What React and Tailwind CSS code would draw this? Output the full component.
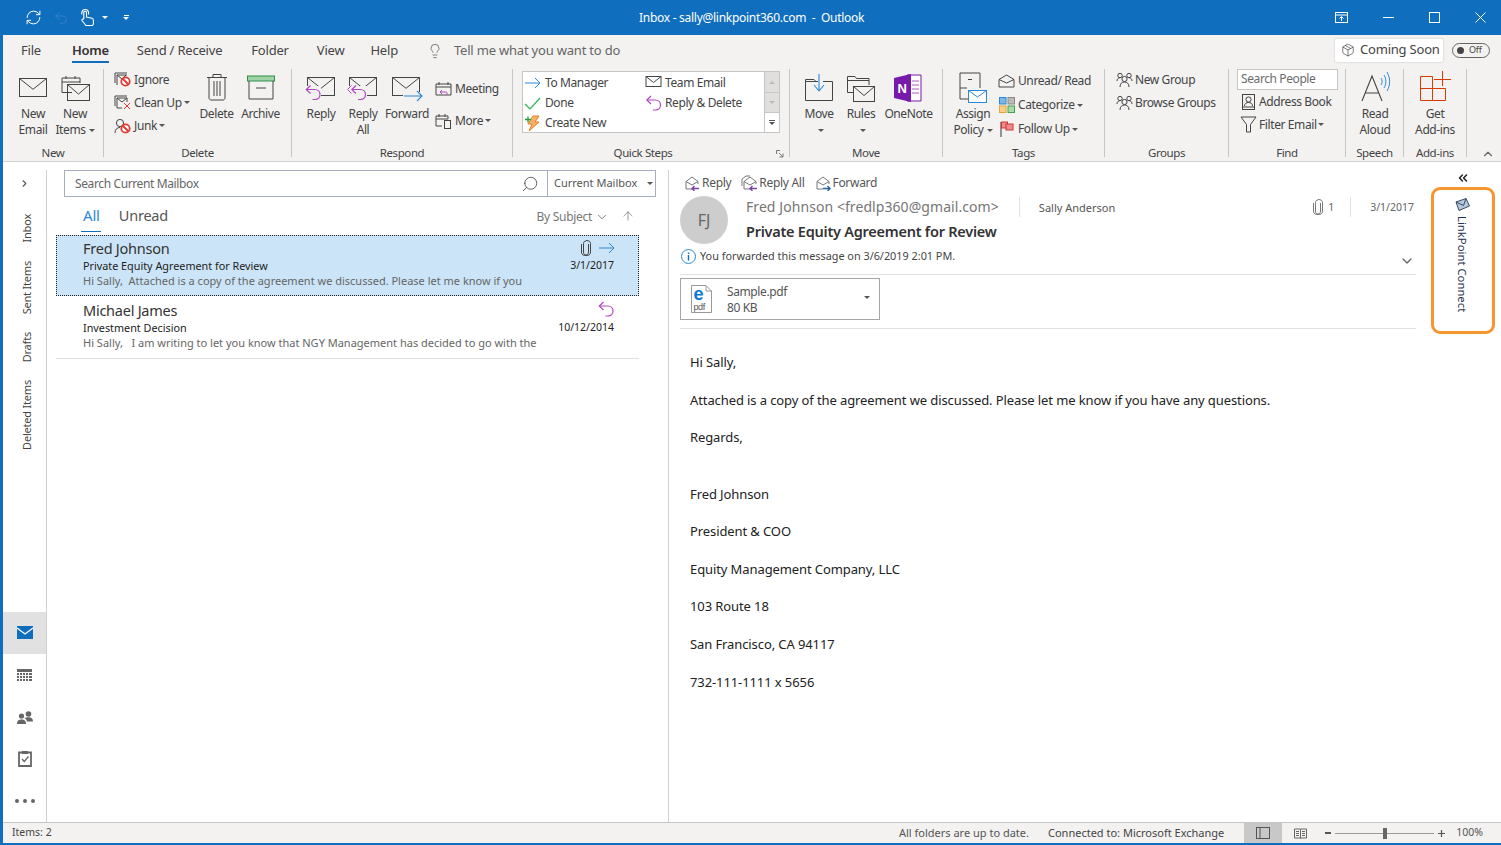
import React from "react";
import { Search, ArrowUp, ChevronDown, ChevronsLeft, ChevronRight, ChevronUp, Lightbulb, Package, RefreshCw, Undo2 } from "lucide-react";

const Caret = ({ c = "#555", cls = "" }) => (
  <svg width="6" height="3" viewBox="0 0 6 3" className={"shrink-0 " + cls}><path d="M0 0h6L3 3z" fill={c} /></svg>
);

const Sv = ({ w, h, children, cls = "" }) => (
  <svg width={w} height={h} viewBox={`0 0 ${w} ${h}`} fill="none" stroke="#444" strokeWidth="1" className={"shrink-0 " + cls}>{children}</svg>
);

const Env = ({ x = 0.5, y = 0.5, w = 27, h = 18, fill = "none", stroke = "#444" }) => (
  <g stroke={stroke}>
    <rect x={x} y={y} width={w} height={h} fill={fill} />
    <path d={`M${x} ${y}L${x + w / 2} ${y + h * 0.6}L${x + w} ${y}`} />
  </g>
);

const ReplyArrow = ({ x = 0, y = 0, c = "#B146C2" }) => (
  <g transform={`translate(${x} ${y})`} stroke={c} strokeWidth="1.2" fill="none">
    <path d="M5 0.5L0.8 4.5L5 8.5" />
    <path d="M1 4.5H9C12.5 4.5 14.5 6.8 14.5 9.5S12.5 14.5 9.5 14.5H7" />
  </g>
);

const Big = ({ w, l1, l2, caret, children, iconCls = "" }) => (
  <div className="flex flex-col items-center shrink-0" style={{ width: w }}>
    <div className={"h-[37px] flex items-center justify-center " + iconCls}>{children}</div>
    <div className="leading-[16px] whitespace-nowrap">{l1}</div>
    {(l2 || caret) && (
      <div className="leading-[16px] whitespace-nowrap flex items-center gap-[3px] h-[16px]">
        {l2}
        {caret && <Caret />}
      </div>
    )}
  </div>
);

const Small = ({ icon, label, caret, gap = "gap-[3px]", h = "h-[23px]" }) => (
  <div className={"flex items-center whitespace-nowrap " + gap + " " + h}>
    <span className="w-[17px] flex justify-center shrink-0">{icon}</span>
    <span>{label}</span>
    {caret && <Caret cls="-ml-[1px]" />}
  </div>
);

const Group = ({ w, label, children, cls = "", after, labelCls = "" }) => (
  <div className="flex flex-col h-[88px] border-r border-[#c6c6c6] shrink-0 relative" style={{ width: w }}>
    <div className={"h-[76px] flex " + cls}>{children}</div>
    <div className={"h-[12px] leading-[16px] text-center text-[11.5px] text-[#444] " + labelCls}>{label}</div>
    {after}
  </div>
);

const Ban = ({ x, y }) => (
  <g transform={`translate(${x} ${y})`}>
    <circle cx="5" cy="5" r="4.2" stroke="#E03C31" strokeWidth="1.8" fill="#fff" />
    <path d="M2 2L8 8" stroke="#E03C31" strokeWidth="1.8" />
  </g>
);

const People = () => (
  <Sv w={17} h={16}>
    <circle cx="4" cy="3.5" r="2.2" />
    <circle cx="13" cy="3.5" r="2.2" />
    <circle cx="8.5" cy="7" r="2.6" />
    <path d="M1 9C1 7 2 6 3.5 6M16 9C16 7 15 6 13.5 6M4 15C4 11.5 6 10 8.5 10S13 11.5 13 15" />
  </Sv>
);

const ActIcon = ({ c, two, forward }) => (
  <Sv w={17} h={16}>
    {two && <path d="M1 11V4L5 1H9" stroke="#777" />}
    <g stroke="#777">
      <path d="M3 6.5V14H9M15 9V6.5L9 2L3 6.5L9 10L15 6.5" />
    </g>
    {forward ? <path d="M9 13.5H16M13.5 11L16 13.5L13.5 16" stroke={c} strokeWidth="1.4" /> : <path d="M16 13.5H9M11.5 11L9 13.5L11.5 16" stroke={c} strokeWidth="1.4" />}
  </Sv>
);

const Ribbon = () => (
  <div className="h-[93px] pb-[4px] border-b border-[#d2d0ce] flex text-[12px] tracking-[-0.4px] text-[#444] bg-[#f3f2f1]">
    <Group w={101} label="New" cls="pl-[9px]">
      <Big w={42} l1="New" l2="Email"><Sv w={28} h={20}><Env /></Sv></Big>
      <Big w={42} l1="New" l2="Items" caret>
        <Sv w={29} h={29} cls="mt-[2px]">
          <path d="M11 18.5H1V4H19V9M1 8H19M5 2V5M14 2V5" />
          <Env x={6.5} y={10.5} w={22} h={16} />
        </Sv>
      </Big>
    </Group>
    <Group w={188} label="Delete">
      <div className="ml-[10px] w-[80px] text-[12px] -mt-[1px]">
        <Small label="Ignore" icon={<Sv w={17} h={15}><path d="M1 11V1H13M3 13V3H13" /><path d="M3 3L8 7L12 3" /><Ban x={6.5} y={4.5} /></Sv>} />
        <Small label="Clean Up" caret icon={<Sv w={17} h={15}><path d="M1 11V1H13M3 13V3H13V7M3 3L8 7L13 3M3 13H8" /><path d="M10 8L16 14M16 8L10 14" stroke="#E03C31" /></Sv>} />
        <Small label="Junk" caret icon={<Sv w={17} h={16}><circle cx="6" cy="5" r="3.6" /><path d="M1 15C1 11.5 3 9.5 6 9.5" /><Ban x={6.5} y={5.5} /></Sv>} />
      </div>
      <Big w={45} l1="Delete">
        <Sv w={22} h={28} cls="-mt-[1px]">
          <path d="M1 4.5H21M7 4V1.5H15V4M3 5V25C3 26 4 27 5 27H17C18 27 19 26 19 25V5M8 8V23M11 8V23M14 8V23" />
        </Sv>
      </Big>
      <Big w={43} l1="Archive">
        <Sv w={28} h={25}>
          <rect x="0.5" y="1" width="27" height="5" fill="#9FD5A6" stroke="#2F8F46" />
          <path d="M2 6V24H26V6M9 13H19" />
        </Sv>
      </Big>
    </Group>
    <Group w={221} label="Respond" cls="pl-[8px]">
      <Big w={42} l1="Reply">
        <Sv w={31} h={28} cls="-ml-[1px]"><Env x={2.5} y={3.5} w={27} h={18} /><rect x="0" y="12" width="16" height="16" fill="#f3f2f1" stroke="none" /><ReplyArrow x={0.5} y={11} /></Sv>
      </Big>
      <Big w={42} l1="Reply" l2="All">
        <Sv w={31} h={28} cls="-ml-[1px]"><Env x={2.5} y={3.5} w={27} h={18} /><rect x="0" y="12" width="20" height="16" fill="#f3f2f1" stroke="none" /><path d="M4.5 11.5L0.5 15.5L4.5 19.5" stroke="#B146C2" /><ReplyArrow x={4} y={11} /></Sv>
      </Big>
      <Big w={46} l1="Forward">
        <Sv w={31} h={28}><Env x={0.5} y={3.5} w={27} h={18} /><rect x="11" y="18" width="20" height="8" fill="#f3f2f1" stroke="none" /><path d="M12 22H29M25 17L30 22L25 27" stroke="#2B88D8" strokeWidth="1.1" /></Sv>
      </Big>
      <div className="ml-[5px] flex flex-col pt-[8px] gap-[9px]">
        <Small h="h-[23px]" label="Meeting" icon={<Sv w={17} h={16}><path d="M1 14V3H16V14H1M1 6H16M4 1V4M13 1V4" /><path d="M7 9L5 11L7 13M5.5 11H11C12.5 11 12.5 14 11 14" stroke="#B146C2" /></Sv>} />
        <Small h="h-[23px]" label="More" caret icon={<Sv w={17} h={16}><path d="M7 13H1V3H13V6M1 6H13M4 1V4M10 1V4" /><rect x="9.5" y="7.5" width="6" height="8" /></Sv>} />
      </div>
    </Group>
    <Group
      w={277}
      label="Quick Steps"
      labelCls="pr-[16px]"
      after={
        <Sv w={8} h={8} cls="absolute right-[5px] bottom-[-1px]"><path d="M0.5 0.5H4M0.5 0.5V4" stroke="#777" /><path d="M3 3L7 7M7 3.5V7H3.5" stroke="#777" /></Sv>
      }
    >
      <div className="ml-[9px] mt-[2px] w-[258px] h-[62px] bg-white border border-[#c6c6c6] flex">
        <div className="w-[122px] pl-[1px] pt-[1px]">
          <Small h="h-[20px]" gap="gap-[4px]" label="To Manager" icon={<Sv w={17} h={12}><path d="M1 6H16M11 1L16 6L11 11" stroke="#2B88D8" /></Sv>} />
          <Small h="h-[20px]" gap="gap-[4px]" label="Done" icon={<Sv w={17} h={13}><path d="M1 7L6 12L16 1" stroke="#2FB457" strokeWidth="1.2" /></Sv>} />
          <Small h="h-[20px]" gap="gap-[4px]" label="Create New" icon={
            <Sv w={17} h={17}>
              <path d="M9 1H15L11 7H15L5 16L8 9H4z" fill="#F6B26B" stroke="#E8801A" />
              <path d="M1 4.5H7M4 1.5V7.5" stroke="#1E9E3E" strokeWidth="1.3" />
            </Sv>
          } />
        </div>
        <div className="w-[119px] pt-[1px]">
          <Small h="h-[20px]" gap="gap-[3px]" label="Team Email" icon={<Sv w={17} h={12} cls="-mt-[3px]"><Env x={1} y={0.5} w={15} h={10} /></Sv>} />
          <Small h="h-[20px]" gap="gap-[3px]" label="Reply & Delete" icon={<Sv w={17} h={16}><ReplyArrow x={1} y={0.5} /></Sv>} />
        </div>
        <div className="w-[15px] flex flex-col border-l border-[#c6c6c6]">
          <div className="h-[20px] bg-[#e1dfdd] flex items-center justify-center"><Caret c="#bbb" cls="rotate-180" /></div>
          <div className="h-[20px] bg-[#e1dfdd] border-t border-[#c6c6c6] flex items-center justify-center"><Caret c="#bbb" /></div>
          <div className="flex-1 border-t border-[#c6c6c6] flex flex-col items-center justify-center gap-[1px]"><div className="w-[6px] h-[1px] bg-[#555]" /><Caret /></div>
        </div>
      </div>
    </Group>
    <Group w={153} label="Move" cls="pl-[8px]">
      <Big w={42} l1="Move" l2={<span className="w-0" />} caret>
        <Sv w={28} h={27}>
          <path d="M0.5 26.5V7.5H11M0.5 7.5V5.5H9L11 7.5H13M18 7.5H27.5V26.5H0.5" />
          <path d="M14 0V16M9 11L14 17L19 11" stroke="#2B88D8" strokeWidth="1.1" />
        </Sv>
      </Big>
      <Big w={42} l1="Rules" l2={<span className="w-0" />} caret>
        <Sv w={29} h={29} cls="mt-[1px]">
          <path d="M0.5 18.5V2.5H8L9.5 4.5H22V11M0.5 6.5H22M0.5 18.5H6" />
          <Env x={6.5} y={12.5} w={21} h={15} />
        </Sv>
      </Big>
      <Big w={53} l1="OneNote">
        <svg width="28" height="28" viewBox="0 0 28 28" className="shrink-0 -ml-[1px]">
          <path d="M13 1H27V27H13z" fill="#fff" stroke="#7719AA" />
          <path d="M18 7H25M18 11H25M18 15H25M18 19H25" stroke="#A45CC7" />
          <path d="M0 4L17 0V28L0 24z" fill="#7719AA" />
          <text x="3.5" y="19" fontSize="13" fontWeight="700" fill="#fff" fontFamily="Liberation Sans">N</text>
        </svg>
      </Big>
    </Group>
    <Group w={162} label="Tags" cls="pl-[8px]">
      <Big w={44} l1="Assign" l2="Policy" caret>
        <Sv w={29} h={34} cls="mt-[3px]">
          <path d="M1 16V1H21V16M1 16H8M1 16V27H9M9 7.5H13" />
          <rect x="9.5" y="18.5" width="18" height="12" fill="#fff" stroke="#2B88D8" />
          <path d="M9.5 18.5L18.5 25L27.5 18.5" stroke="#2B88D8" />
        </Sv>
      </Big>
      <div className="ml-[3px]">
        <Small h="h-[24px]" label="Unread/ Read" icon={<Sv w={17} h={14}><path d="M1 5.5V13H16V5.5L8.5 1L1 5.5L8.5 9L16 5.5" /></Sv>} />
        <Small h="h-[24px]" label="Categorize" caret icon={
          <svg width="16" height="16" viewBox="0 0 16 16" className="shrink-0">
            <rect x="0.5" y="0.5" width="6.5" height="6.5" fill="#7DB7E8" stroke="#2B88D8" />
            <rect x="9" y="0.5" width="6.5" height="6.5" fill="#bbb" stroke="#888" />
            <rect x="0.5" y="9" width="6.5" height="6.5" fill="#F8CE8A" stroke="#E8A33A" />
            <rect x="9" y="9" width="6.5" height="6.5" fill="#A8DBA8" stroke="#3EA44E" />
          </svg>
        } />
        <Small h="h-[24px]" label="Follow Up" caret icon={
          <svg width="14" height="16" viewBox="0 0 14 16" className="shrink-0">
            <path d="M1 1V16" stroke="#333" />
            <rect x="1.5" y="1" width="6" height="6" fill="#F38B8B" stroke="#D13438" />
            <rect x="6" y="3" width="7" height="6" fill="#F38B8B" stroke="#D13438" />
          </svg>
        } />
      </div>
    </Group>
    <Group w={124} label="Groups" cls="pl-[11px]">
      <div className="-mt-[1px]">
        <Small gap="gap-[2px]" label="New Group" icon={<People />} />
        <Small gap="gap-[2px]" label="Browse Groups" icon={<People />} />
      </div>
    </Group>
    <Group w={117} label="Find" cls="flex-col pl-[8px]">
      <div className="w-[101px] h-[21px] bg-white border border-[#c6c6c6] pl-[3px] leading-[18px] text-[#6b6b6b]">Search People</div>
      <div className="pl-[3px]">
        <Small gap="gap-[2px]" label="Address Book" icon={<Sv w={13} h={16}><rect x="0.5" y="0.5" width="12" height="15" /><circle cx="6.5" cy="5.5" r="2.6" /><path d="M2.5 12C2.5 9.5 4.5 8.5 6.5 8.5S10.5 9.5 10.5 12M0.5 13H12.5" /></Sv>} />
        <Small gap="gap-[2px]" label="Filter Email" caret icon={<Sv w={17} h={17}><path d="M1 1H16L10.5 8.5V16H6.5V8.5z" /></Sv>} />
      </div>
    </Group>
    <Group w={58} label="Speech">
      <Big w={58} l1="Read" l2="Aloud">
        <Sv w={30} h={30} cls="-mt-[3px] ml-[1px]">
          <path d="M1 30L11 5L21 30M4.5 22H17.5" strokeWidth="1.1" />
          <path d="M20 7C21.5 9 21.5 12 20 14M23 4C25.5 8 25.5 13 23 17M26 1C29.5 7 29.5 14 26 20" stroke="#2B88D8" />
        </Sv>
      </Big>
    </Group>
    <Group w={63} label="Add-ins">
      <Big w={62} l1="Get" l2="Add-ins">
        <Sv w={31} h={30} cls="-mt-[3px]">
          <g stroke="#D83B01">
            <path d="M0.5 5.5H12.5V29.5H0.5zM0.5 17.5H25.5V29.5H12.5M14 8.5H31M22.5 0V15" />
          </g>
        </Sv>
      </Big>
    </Group>
    <div className="flex-1 relative">
      <ChevronUp size={14} strokeWidth={2} color="#666" className="absolute right-[6px] top-[78px]" />
    </div>
  </div>
);

const lines = [
  ["Hi Sally,", "mt-0"],
  ["Attached is a copy of the agreement we discussed. Please let me know if you have any questions.", "mt-[18px]"],
  ["Regards,", "mt-[17px]"],
  ["Fred Johnson", "mt-[37px]"],
  ["President & COO", "mt-[17px]"],
  ["Equity Management Company, LLC", "mt-[18px]"],
  ["103 Route 18", "mt-[17px]"],
  ["San Francisco, CA 94117", "mt-[18px]"],
  ["732-111-1111 x 5656", "mt-[18px]"],
];

const navTexts = [
  ["Inbox", "mt-[18px]"],
  ["Sent Items", "mt-[18px]"],
  ["Drafts", "mt-[18px]"],
  ["Deleted Items", "mt-[18px]"],
];

export default function App() {
  return (
    <div className="w-[1501px] h-[845px] overflow-hidden bg-white [font-family:'Noto_Sans',sans-serif] text-[12px] tracking-[-0.2px] flex flex-col">
      {/* title bar */}
      <div className="h-[35px] bg-[#106EBE] flex items-center text-white shrink-0">
        <div className="flex items-center pl-[25px]">
          <RefreshCw size={17} strokeWidth={1.4} color="#fff" />
          <Undo2 size={16} strokeWidth={1.2} color="#3A86CC" className="ml-[11px]" />
          <svg width="13" height="17" viewBox="0 0 13 17" fill="none" stroke="#fff" strokeWidth="1.1" className="ml-[12px] shrink-0">
            <path d="M1.2 5.5A3.4 3.4 0 1 1 7.2 5.5" />
            <path d="M2.8 10V3.5C2.8 1.8 5.5 1.8 5.5 3.5V8L11 9.3C12 9.6 12.4 10.2 12.4 11.2V15L11.4 16.5H5L1 11.5C0.6 10.2 1.8 9.5 2.8 10.3" />
          </svg>
          <Caret c="#fff" cls="ml-[8px]" />
          <div className="ml-[15px] flex flex-col items-center gap-[1px]"><div className="w-[5px] h-[1px] bg-white" /><Caret c="#fff" /></div>
        </div>
        <div className="ml-[510px] text-[12px] tracking-[-0.28px] whitespace-nowrap">Inbox - sally@linkpoint360.com&nbsp; -&nbsp; Outlook</div>
        <div className="flex items-center ml-auto mr-[15px]">
          <Sv w={13} h={11}><g stroke="#fff"><rect x="0.5" y="0.5" width="12" height="10" /><path d="M0.5 3H12.5M6.5 9V5M4.5 6.5L6.5 4.5L8.5 6.5" /></g></Sv>
          <Sv w={11} h={11} cls="ml-[35px]"><path d="M0 5.5H11" stroke="#fff" /></Sv>
          <Sv w={11} h={11} cls="ml-[35px]"><rect x="0.5" y="0.5" width="10" height="10" stroke="#fff" /></Sv>
          <Sv w={11} h={11} cls="ml-[35px]"><path d="M0.5 0.5L10.5 10.5M10.5 0.5L0.5 10.5" stroke="#fff" /></Sv>
        </div>
      </div>
      {/* body */}
      <div className="flex-1 border-l-[3px] border-b-2 border-[#106EBE] flex flex-col min-h-0">
        {/* menu */}
        <div className="h-[34px] pb-[2px] bg-[#f3f2f1] flex items-center text-[13px] text-[#444] shrink-0">
          <span className="ml-[18px]">File</span>
          <div className="ml-[31px] h-[32px] relative flex items-center font-semibold text-[#333] tracking-[-0.3px]">
            Home
            <div className="absolute left-0 right-0 bottom-[4px] h-[2px] bg-[#106EBE]" />
          </div>
          <span className="ml-[28px]">Send / Receive</span>
          <span className="ml-[29px]">Folder</span>
          <span className="ml-[28px]">View</span>
          <span className="ml-[26px]">Help</span>
          <Lightbulb size={16} strokeWidth={1} color="#444" className="ml-[29px]" />
          <span className="ml-[11px] text-[#666]">Tell me what you want to do</span>
          <div className="ml-auto mb-[2px] h-[23px] w-[108px] bg-white rounded-[2px] shadow-[0_0_2px_#bbb] flex items-center pl-[6px] gap-[5px] text-[#444]">
            <Package size={14} strokeWidth={1.1} color="#333" />
            Coming Soon
          </div>
          <div className="ml-[9px] mr-[11px] mb-[2px] h-[15px] w-[38px] rounded-full border border-[#666] flex items-center pl-[4px] gap-[5px] text-[9px] text-[#444]">
            <div className="w-[7px] h-[7px] rounded-full bg-[#444]" />
            Off
          </div>
        </div>
        <Ribbon />
        {/* main */}
        <div className="flex h-[660px] shrink-0 bg-white">
          {/* nav */}
          <div className="w-[44px] mt-[8px] border-r border-[#d2d0ce] flex flex-col shrink-0 text-[11px] text-[#444]">
            <div className="h-[26px] flex items-center justify-center">
              <ChevronRight size={11} strokeWidth={2.4} color="#555" className="mr-[1px]" />
            </div>
            {navTexts.map(([t, m]) => (
              <div key={t} className={"flex justify-center ml-[5px] " + m}>
                <span className="[writing-mode:vertical-rl] rotate-180 whitespace-nowrap leading-[14px]">{t}</span>
              </div>
            ))}
            <div className="flex-1" />
            <div className="h-[42px] bg-[#e1e1e1] flex items-center justify-center pb-[2px]">
              <svg width="16" height="13" viewBox="0 0 16 13"><rect width="16" height="13" fill="#106EBE" /><path d="M0 2L8 8L16 2" stroke="#fff" strokeWidth="1.2" fill="none" /></svg>
            </div>
            <div className="h-[42px] flex items-center justify-center">
              <svg width="15" height="12" viewBox="0 0 15 12" fill="#666"><rect width="15" height="3" /><path d="M0 4h2v2H0zM3 4h2v2H3zM6 4h2v2H6zM9 4h2v2H9zM12 4h3v2h-3zM0 7h2v2H0zM3 7h2v2H3zM6 7h2v2H6zM9 7h2v2H9zM12 7h3v2h-3zM0 10h2v2H0zM3 10h2v2H3zM6 10h2v2H6zM9 10h2v2H9zM12 10h3v2h-3z" /></svg>
            </div>
            <div className="h-[42px] flex items-center justify-center">
              <svg width="16" height="13" viewBox="0 0 16 13" fill="#666"><circle cx="4.5" cy="5" r="2.6" /><circle cx="11.5" cy="3" r="2.8" /><path d="M0 13C0 9.5 2 8.5 4.5 8.5S9 9.5 9 13zM7.5 7C8.5 6.4 10 6.2 11.5 6.2C14 6.2 16 7.2 16 10.5H10C9.7 9 8.8 7.8 7.5 7z" /></svg>
            </div>
            <div className="h-[42px] flex items-center justify-center">
              <svg width="14" height="16" viewBox="0 0 14 16" fill="none"><path d="M4 1.5H1V15H13V1.5H10" stroke="#666" strokeWidth="1.8" /><rect x="4" y="0" width="6" height="3" fill="#666" /><path d="M4 8L6.3 10.5L10.5 5.5" stroke="#666" strokeWidth="1.3" /></svg>
            </div>
            <div className="h-[42px] flex items-center justify-center gap-[4px]">
              <div className="w-[4px] h-[4px] rounded-full bg-[#666]" />
              <div className="w-[4px] h-[4px] rounded-full bg-[#666]" />
              <div className="w-[4px] h-[4px] rounded-full bg-[#666]" />
            </div>
          </div>
          {/* list */}
          <div className="w-[622px] mt-[8px] border-r border-[#d2d0ce] shrink-0">
            <div className="ml-[17px] w-[592px] h-[27px] border border-[#a6aebd] flex items-center text-[#666]">
              <span className="ml-[10px] flex-1 tracking-[-0.38px]">Search Current Mailbox</span>
              <Search size={18} strokeWidth={1} color="#333" className="mr-[8px] -scale-x-100" />
              <div className="h-full w-[108px] border-l border-[#a6aebd] flex items-center pl-[6px] text-[11px] text-[#555] tracking-[0px]">
                Current Mailbox
                <Caret cls="ml-[10px]" />
              </div>
            </div>
            <div className="h-[38px] flex items-center">
              <div className="ml-[36px] h-full flex items-center relative text-[15px] text-[#2B88D8] pb-[2px]">
                All
                <div className="absolute left-[-2px] w-[20px] bottom-[3px] h-[1px] bg-[#106EBE]" />
              </div>
              <span className="ml-[19px] text-[14.5px] text-[#555]">Unread</span>
              <div className="ml-auto flex items-center text-[#777] mr-[33px] tracking-[-0.3px] mt-[2px]">
                By Subject
                <ChevronDown size={14} strokeWidth={1.3} color="#555" className="ml-[3px]" />
                <ArrowUp size={14} strokeWidth={1} color="#555" className="ml-[12px] -mt-[2px]" />
              </div>
            </div>
            <div className="ml-[9px] w-[583px] h-[61px] bg-[#CCE4F7] border border-dotted border-[#222] pl-[26px] pr-[24px] pt-[5px]">
              <div className="h-[17px] flex items-center justify-between">
                <span className="text-[14.5px] tracking-[-0.25px] text-[#333] mb-[1px]">Fred Johnson</span>
                <div className="flex items-center gap-[8px] -mr-[1px] mb-[3px]">
                  <Sv w={10} h={16}><path d="M7.5 4V12C7.5 14 6.5 15 5 15S2.5 14 2.5 12V3.5C2.5 2 3.5 1 5 1" stroke="#444" /><path d="M0.5 4V12C0.5 15 2.5 15.5 5 15.5S9.5 15 9.5 12V3.5C9.5 1.5 8 0.5 5 0.5" stroke="#444" /></Sv>
                  <Sv w={16} h={12}><path d="M0 6H15M10 1L15 6L10 11" stroke="#2B88D8" /></Sv>
                </div>
              </div>
              <div className="h-[15px] leading-[15px] flex justify-between text-[10.8px] text-[#222] tracking-[0px]">
                <span>Private Equity Agreement for Review</span>
                <span className="text-[10.5px]">3/1/2017</span>
              </div>
              <div className="h-[15px] leading-[15px] text-[11px] text-[#666] tracking-[0px]">Hi Sally,&nbsp; Attached is a copy of the agreement we discussed. Please let me know if you</div>
            </div>
            <div className="ml-[9px] w-[583px] h-[63px] border-b border-[#e1e1e1] pl-[27px] pr-[25px] pt-[7px]">
              <div className="h-[17px] flex items-center justify-between">
                <span className="text-[14.5px] tracking-[-0.25px] text-[#333] mb-[1px]">Michael James</span>
                <span className="mb-[5px]"><Sv w={16} h={16}><ReplyArrow x={0.5} y={0.5} /></Sv></span>
              </div>
              <div className="h-[15px] leading-[15px] flex justify-between text-[10.8px] text-[#222] tracking-[0px]">
                <span>Investment Decision</span>
                <span className="text-[10.5px]">10/12/2014</span>
              </div>
              <div className="h-[15px] leading-[15px] text-[11px] text-[#666] tracking-[0px]">Hi Sally,&nbsp;&nbsp; I am writing to let you know that NGY Management has decided to go with the</div>
            </div>
          </div>
          {/* reading */}
          <div className="w-[751px] shrink-0 pt-[10px]">
            <div className="h-[22px] pl-[14px] flex items-center text-[#555] tracking-[-0.3px]">
              <ActIcon c="#7B3FA0" />
              <span className="ml-[2px]">Reply</span>
              <span className="ml-[10px]"><ActIcon c="#7B3FA0" two /></span>
              <span className="ml-[1px]">Reply All</span>
              <span className="ml-[10px]"><ActIcon c="#2B5FA8" forward /></span>
              <span className="ml-[1px]">Forward</span>
            </div>
            <div className="mt-[2px] pl-[11px] pr-[6px] flex">
              <div className="w-[48px] h-[48px] rounded-full bg-[#cdcdcd] flex items-center justify-center text-[16px] text-[#666] shrink-0">FJ</div>
              <div className="ml-[18px] flex-1">
                <div className="h-[22px] flex items-center">
                  <span className="text-[14px] text-[#767676] tracking-[0.07px] mb-[2px]">{"Fred Johnson <fredlp360@gmail.com>"}</span>
                  <div className="ml-[20px] h-[20px] border-l border-[#e1e1e1]" />
                  <span className="ml-[19px] mt-[2px] text-[11px] text-[#555] tracking-[0px]">Sally Anderson</span>
                  <div className="ml-auto mt-[2px] flex items-center text-[10.5px] text-[#666]">
                    <Sv w={10} h={16} cls="-mt-[2px]"><path d="M7.5 4V12C7.5 14 6.5 15 5 15S2.5 14 2.5 12V3.5C2.5 2 3.5 1 5 1" stroke="#777" /><path d="M0.5 4V12C0.5 15 2.5 15.5 5 15.5S9.5 15 9.5 12V3.5C9.5 1.5 8 0.5 5 0.5" stroke="#777" /></Sv>
                    <span className="ml-[5px]">1</span>
                    <div className="ml-[16px] h-[20px] border-l border-[#e1e1e1] -mt-[2px]" />
                    <span className="ml-[19px] tracking-[0px]">3/1/2017</span>
                  </div>
                </div>
                <div className="mt-[3px] h-[22px] flex items-center pb-[1px] text-[14.5px] font-semibold text-[#333] tracking-[-0.25px]">Private Equity Agreement for Review</div>
              </div>
            </div>
            <div className="mt-[4px] ml-[12px] mr-[6px] h-[16px] flex items-center text-[10.85px] text-[#444] tracking-[0px]">
              <Sv w={15} h={15}><circle cx="7.5" cy="7.5" r="7" stroke="#2B88D8" /><path d="M7.5 6V11.5M7.5 3.5V5" stroke="#106EBE" strokeWidth="1.4" /></Sv>
              <span className="ml-[4px]">You forwarded this message on 3/6/2019 2:01 PM.</span>
              <ChevronDown size={16} strokeWidth={2} color="#666" className="ml-auto mt-[9px] mr-[-1px]" />
            </div>
            <div className="ml-[11px] mr-[4px] mt-[10px] border-t border-[#e1e1e1] h-[55px] border-b pt-[3px]">
              <div className="w-[200px] h-[42px] border border-[#a6a6a6] flex items-center pl-[10px] text-[#555] text-[12px] tracking-[-0.4px]">
                <svg width="21" height="28" viewBox="0 0 21 28" fill="none" className="shrink-0">
                  <path d="M0.5 0.5H15L20.5 6V27.5H0.5z" stroke="#999" fill="#fff" />
                  <path d="M15 0.5V6H20.5" stroke="#999" />
                  <text x="2.5" y="15" fontSize="18" fontWeight="700" fill="#0B7BD6" fontFamily="Liberation Sans">e</text>
                  <text x="2.5" y="25" fontSize="9" fill="#555" fontFamily="Liberation Sans">pdf</text>
                </svg>
                <div className="ml-[15px] leading-[16px] flex-1 mt-[2px]">
                  <div>Sample.pdf</div>
                  <div>80 KB</div>
                </div>
                <Caret cls="mr-[9px] -mt-[3px]" />
              </div>
            </div>
            <div className="pl-[21px] pt-[23px] text-[13px] leading-[20px] text-[#222] tracking-[-0.1px]">
              {lines.map(([t, m]) => (
                <div key={t} className={m}>{t}</div>
              ))}
            </div>
          </div>
          {/* side */}
          <div className="flex-1 pt-[9px]">
            <div className="h-[14px] ml-[11px] w-[64px] flex items-center justify-center">
              <ChevronsLeft size={14} strokeWidth={2.6} color="#222" />
            </div>
            <div className="mt-[2px] ml-[11px] w-[64px] h-[147px] border-[3px] border-[#F7952E] rounded-[9px] flex flex-col items-center pt-[8px]">
              <svg width="15" height="13" viewBox="0 0 15 13" className="-ml-[1px]">
                <path d="M1 4L11 0.5L14.5 8L4 12.5z" fill="#B5C7DC" stroke="#3A4A5C" />
                <path d="M1 4L8.5 7.5L11 0.5" stroke="#3A4A5C" fill="none" />
              </svg>
              <div className="mt-[5px] -ml-[3px] [writing-mode:vertical-rl] [font-family:'Liberation_Sans',sans-serif] text-[11.3px] tracking-[0px] text-[#1f3350] leading-[14px] whitespace-nowrap">LinkPoint Connect</div>
            </div>
          </div>
        </div>
        {/* status */}
        <div className="h-[21px] border-t border-[#c6c6c6] bg-[#f3f2f1] flex items-center text-[11px] tracking-[0px] text-[#444] shrink-0">
          <span className="ml-[9px] text-[10.5px]">Items: 2</span>
          <span className="ml-auto text-[#555]">All folders are up to date.</span>
          <span className="ml-[19px]">Connected to: Microsoft Exchange</span>
          <div className="ml-[20px] w-[38px] h-full bg-[#c8c8c8] flex items-center justify-center">
            <Sv w={14} h={12}><rect x="0.5" y="0.5" width="13" height="11" stroke="#555" /><path d="M4 0.5V11.5" stroke="#555" /></Sv>
          </div>
          <div className="ml-[12px]">
            <Sv w={13} h={11}><path d="M6.5 1.5V10.5M0.5 1H6.5L12.5 1V10H0.5zM2 3.5H5M2 5.5H5M2 7.5H5M8 3.5H11M8 5.5H11M8 7.5H11" stroke="#666" /></Sv>
          </div>
          <div className="ml-[18px] w-[6px] h-[2px] bg-[#555]" />
          <div className="ml-[4px] w-[99px] h-[1px] bg-[#999] relative">
            <div className="absolute left-[48px] -top-[5px] w-[4px] h-[11px] bg-[#666]" />
          </div>
          <Sv w={7} h={7} cls="ml-[4px]"><path d="M0 3.5H7M3.5 0V7" stroke="#555" strokeWidth="1.2" /></Sv>
          <span className="ml-[11px] mr-[18px] text-[10.5px] text-[#555]">100%</span>
        </div>
      </div>
    </div>
  );
}
